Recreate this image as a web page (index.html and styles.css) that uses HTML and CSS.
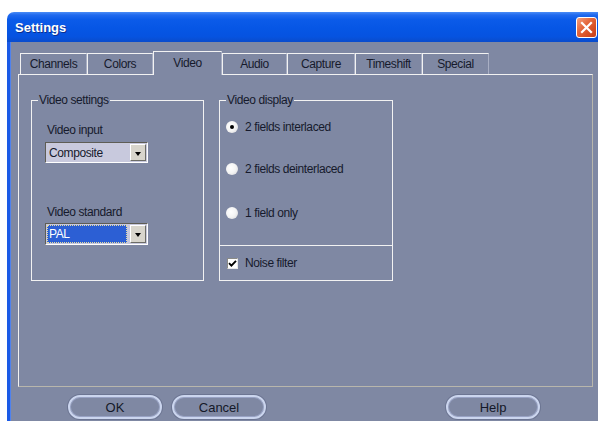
FILE: index.html
```html
<!DOCTYPE html>
<html lang="en">
<head>
<meta charset="utf-8">
<title>Settings</title>
<link rel="stylesheet" href="styles.css">
</head>
<body>
<div class="window">
  <div class="titlebar">
    <span class="title">Settings</span>
    <span class="close" aria-label="Close">
      <svg width="13" height="13" viewBox="0 0 13 13"><path d="M2 2 L11 11 M11 2 L2 11" stroke="#fff" stroke-width="2.2" stroke-linecap="square"/></svg>
    </span>
  </div>
  <div class="frame">
    <div class="tabs">
      <div class="tab tab-channels">Channels</div>
      <div class="tab tab-colors">Colors</div>
      <div class="tab tab-video active">Video</div>
      <div class="tab tab-audio">Audio</div>
      <div class="tab tab-capture">Capture</div>
      <div class="tab tab-timeshift">Timeshift</div>
      <div class="tab tab-special">Special</div>
    </div>
    <div class="panel">
      <div class="groups">
        <fieldset class="group group-settings">
          <legend>Video settings</legend>
          <div class="settings-body">
            <div class="label">Video input</div>
            <div class="select">
              <span class="value">Composite</span>
              <span class="drop"><span class="arrow"></span></span>
            </div>
            <div class="label label-standard">Video standard</div>
            <div class="select select-focus">
              <span class="value"><span class="highlight">PAL</span></span>
              <span class="drop"><span class="arrow"></span></span>
            </div>
          </div>
        </fieldset>
        <fieldset class="group group-display">
          <legend>Video display</legend>
          <div class="option option-first"><span class="radio checked"></span>2 fields interlaced</div>
          <div class="option option-second"><span class="radio"></span>2 fields deinterlaced</div>
          <div class="option option-third"><span class="radio"></span>1 field only</div>
          <div class="divider"></div>
          <div class="option option-check">
            <span class="checkbox">
              <svg width="9" height="9" viewBox="0 0 9 9"><path d="M1 4.2 L3.4 6.6 L8 1.8" fill="none" stroke="#000" stroke-width="1.9"/></svg>
            </span>Noise filter
          </div>
        </fieldset>
      </div>
    </div>
    <div class="buttons">
      <div class="btn">OK</div>
      <div class="btn">Cancel</div>
      <div class="btn btn-help">Help</div>
    </div>
  </div>
</div>
</body>
</html>
```

FILE: styles.css
```css
html, body {
  margin: 0;
  background: #ffffff;
}

body {
  width: 598px;
  height: 421px;
  overflow: hidden;
  font-family: "Liberation Sans", Arial, sans-serif;
  font-size: 12px;
  letter-spacing: -0.4px;
  color: #161a2c;
}

/* window chrome */
.window {
  margin: 12px 0 0 7px;
  width: 600px;
}

.titlebar {
  height: 30px;
  box-sizing: border-box;
  display: flex;
  align-items: center;
  justify-content: space-between;
  padding: 0 10px 0 8px;
  border-radius: 7px 7px 0 0;
  background: linear-gradient(to bottom, #4a8cf6 0%, #1f69ee 10%, #0b5be9 25%, #0656e5 55%, #0653e0 82%, #0a4ccc 100%);
}

.title {
  color: #ffffff;
  font-weight: bold;
  font-size: 13px;
  letter-spacing: 0;
  text-shadow: 1px 1px 0 #0b2f8e;
}

.close {
  width: 21px;
  height: 21px;
  box-sizing: border-box;
  border: 1px solid #ffffff;
  border-radius: 3px;
  background: linear-gradient(135deg, #f4a07c 0%, #e4683c 40%, #d44c22 75%, #c2401c 100%);
  display: flex;
  align-items: center;
  justify-content: center;
}

.frame {
  border-left: 3px solid #1a5ae6;
  box-shadow: inset 1px 0 0 #4f82ee;
  background: #7f88a3;
  height: 380px;
  box-sizing: border-box;
  padding: 9px 0 0 8px;
}

/* tab strip */
.tabs {
  display: flex;
  align-items: flex-end;
  height: 24px;
  margin: 0 0 -1px 2px;
  position: relative;
  z-index: 1;
}

.tab {
  height: 21px;
  margin-bottom: 1px;
  box-sizing: border-box;
  border-left: 1px solid #f2f2f2;
  border-top: 1px solid #f2f2f2;
  border-right: 1px solid #a9afc4;
  background: #7f88a3;
  display: flex;
  align-items: center;
  justify-content: center;
}

.tab.active {
  height: 24px;
  margin-bottom: 0;
  padding-bottom: 2px;
}

.tab-channels { width: 67px; }
.tab-colors { width: 66px; }
.tab-video { width: 69px; }
.tab-audio { width: 65px; }
.tab-capture { width: 68px; }
.tab-timeshift { width: 67px; }
.tab-special { width: 67px; }

.panel {
  width: 575px;
  height: 313px;
  box-sizing: border-box;
  border: 1px solid;
  border-color: #f2f2f2 #b8b6ac #b8b6ac #f2f2f2;
  padding: 18px 0 0 12px;
}

.groups {
  display: flex;
  gap: 15px;
}

.group {
  margin: 0;
  padding: 0;
  min-width: 0;
  box-sizing: border-box;
  height: 188px;
  border: 1px solid #f2f2f2;
}

.group legend {
  margin-left: 6px;
  padding: 0 1px;
  line-height: 14px;
}

.group-settings { width: 173px; }
.group-display { width: 174px; }

/* video settings */
.settings-body {
  padding: 16px 0 0 13px;
}

.label {
  margin-left: 2px;
  line-height: 14px;
}

.label-standard {
  margin-top: 42px;
}

.select {
  margin-top: 5px;
  width: 103px;
  height: 21px;
  box-sizing: border-box;
  display: flex;
  border: 1px solid;
  border-color: #5e5d55 #ffffff #ffffff #5e5d55;
  background: #c8c9dd;
}

.select-focus {
  margin-top: 4px;
  height: 22px;
}

.value {
  flex: 1;
  display: flex;
  align-items: center;
  padding-left: 3px;
}

.select-focus .value {
  padding: 1px 3px 1px 1px;
}

.highlight {
  flex: 1;
  align-self: stretch;
  display: flex;
  align-items: center;
  padding-left: 2px;
  background: #2c5fd4;
  color: #ffffff;
  outline: 1px dotted #e8dc9c;
  outline-offset: -1px;
}

.drop {
  width: 16px;
  margin: 1px 1px 1px 0;
  box-sizing: border-box;
  background: #d8d5cc;
  border: 1px solid;
  border-color: #ffffff #6c6c66 #6c6c66 #ffffff;
  display: flex;
  align-items: center;
  justify-content: center;
}

.arrow {
  width: 0;
  height: 0;
  margin-top: 2px;
  border-left: 3.5px solid transparent;
  border-right: 3.5px solid transparent;
  border-top: 4px solid #000000;
}

/* video display */
.option {
  display: flex;
  align-items: center;
  gap: 7px;
  height: 14px;
  padding-left: 6px;
}

.option-first { margin-top: 13px; }
.option-second { margin-top: 28px; }
.option-third { margin-top: 30px; }

.radio {
  width: 12px;
  height: 12px;
  box-sizing: border-box;
  border-radius: 50%;
  background: radial-gradient(circle at 40% 40%, #ffffff 0%, #f4f4f4 50%, #d2d2d6 100%);
  display: flex;
  align-items: center;
  justify-content: center;
}

.radio.checked::after {
  content: "";
  width: 4px;
  height: 4px;
  border-radius: 50%;
  background: #000000;
}

.divider {
  margin-top: 25px;
  border-top: 1px solid #f2f2f2;
}

.option-check {
  margin-top: 10px;
  padding-left: 7px;
}

.checkbox {
  width: 11px;
  height: 11px;
  box-sizing: border-box;
  background: #ffffff;
  border: 1px solid;
  border-color: #8a8a86 #e8e8e8 #e8e8e8 #8a8a86;
  display: flex;
  align-items: center;
  justify-content: center;
}

/* dialog buttons */
.buttons {
  display: flex;
  gap: 10px;
  margin-top: 8px;
  padding-left: 50px;
}

.btn {
  width: 94px;
  height: 24px;
  box-sizing: border-box;
  border-radius: 12px;
  border: 2px solid #cbd5ee;
  box-shadow: 0 0 0 1px #6c7592, inset 0 0 0 1px #98a2c4;
  background: #7f88a3;
  display: flex;
  align-items: center;
  justify-content: center;
  font-size: 13px;
  letter-spacing: 0;
  color: #141828;
}

.btn-help {
  margin-left: 170px;
}
```
